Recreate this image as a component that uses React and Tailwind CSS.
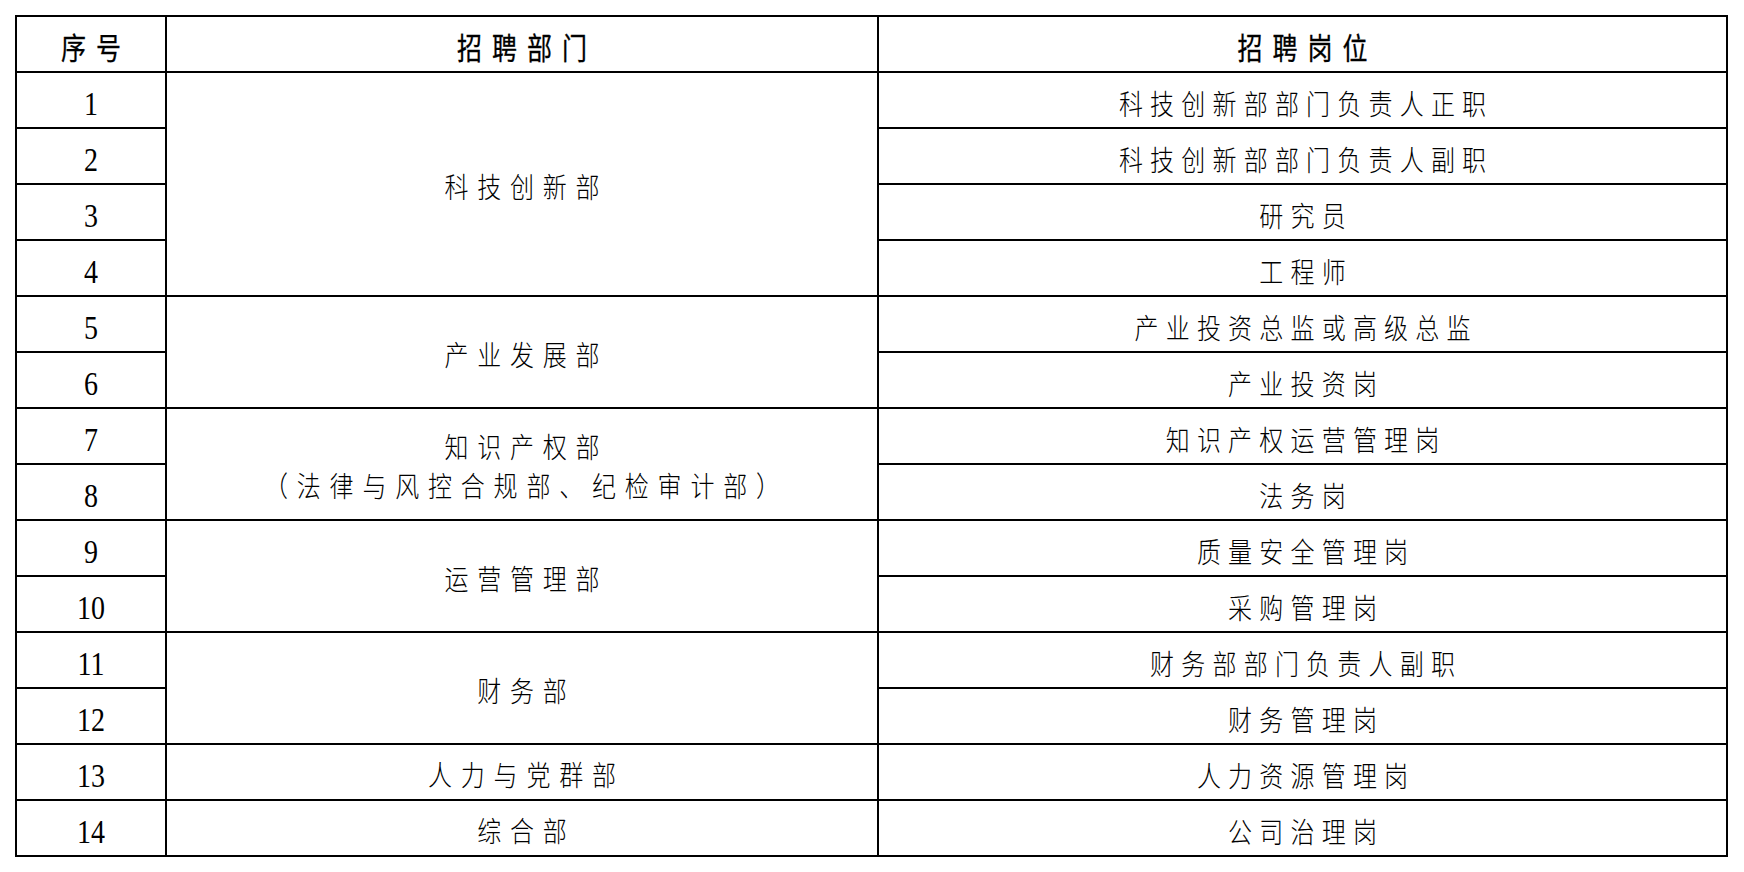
import React from "react";

const CJK = "font-['Noto_Sans_CJK_SC','Noto_Sans',sans-serif]";
const SERIF = "font-['Liberation_Serif','Noto_Sans_CJK_SC',serif]";

const rows = [
  { n: 1, pos: "科技创新部部门负责人正职", dept: ["科技创新部"], span: 4 },
  { n: 2, pos: "科技创新部部门负责人副职" },
  { n: 3, pos: "研究员" },
  { n: 4, pos: "工程师" },
  { n: 5, pos: "产业投资总监或高级总监", dept: ["产业发展部"], span: 2 },
  { n: 6, pos: "产业投资岗" },
  {
    n: 7,
    pos: "知识产权运营管理岗",
    dept: ["知识产权部", "（法律与风控合规部、纪检审计部）"],
    span: 2,
  },
  { n: 8, pos: "法务岗" },
  { n: 9, pos: "质量安全管理岗", dept: ["运营管理部"], span: 2 },
  { n: 10, pos: "采购管理岗" },
  { n: 11, pos: "财务部部门负责人副职", dept: ["财务部"], span: 2 },
  { n: 12, pos: "财务管理岗" },
  { n: 13, pos: "人力资源管理岗", dept: ["人力与党群部"], span: 1 },
  { n: 14, pos: "公司治理岗", dept: ["综合部"], span: 1 },
];

const spanClass = { 1: "row-span-1", 2: "row-span-2", 4: "row-span-4" };

function HeadText({ children }) {
  return (
    <span
      className={`${CJK} text-[25px] leading-none tracking-[10px] -mr-[10px] text-black scale-y-[1.18] [-webkit-text-stroke:0.25px_black]`}
    >
      {children}
    </span>
  );
}

function DeptText({ children }) {
  return (
    <span
      className={`${CJK} font-light text-[24px] leading-[39px] tracking-[8.8px] -mr-[8.8px] text-black scale-y-[1.18] whitespace-nowrap`}
    >
      {children}
    </span>
  );
}

function PosText({ children }) {
  return (
    <span
      className={`${CJK} font-light text-[24px] leading-[39px] tracking-[7.2px] -mr-[7.2px] text-black scale-y-[1.18] whitespace-nowrap`}
    >
      {children}
    </span>
  );
}

export default function App() {
  const cells = [];
  cells.push(
    <div key="h1" className="col-start-1 bg-white flex items-center justify-center pt-[5px]">
      <HeadText>序号</HeadText>
    </div>,
    <div key="h2" className="col-start-2 bg-white flex items-center justify-center pt-[5px]">
      <HeadText>招聘部门</HeadText>
    </div>,
    <div key="h3" className="col-start-3 bg-white flex items-center justify-center pt-[5px]">
      <HeadText>招聘岗位</HeadText>
    </div>
  );
  rows.forEach((r) => {
    cells.push(
      <div
        key={`n${r.n}`}
        className="col-start-1 bg-white flex items-center justify-center pt-[8px]"
      >
        <span className={`${SERIF} text-[28px] leading-none text-black scale-y-[1.18]`}>
          {r.n}
        </span>
      </div>
    );
    if (r.dept) {
      cells.push(
        <div
          key={`d${r.n}`}
          className={`col-start-2 ${spanClass[r.span]} bg-white flex flex-col items-center justify-center pt-[2px]`}
        >
          {r.dept.map((t) => (
            <DeptText key={t}>{t}</DeptText>
          ))}
        </div>
      );
    }
    cells.push(
      <div
        key={`p${r.n}`}
        className="col-start-3 bg-white flex items-center justify-center pt-[4px]"
      >
        <PosText>{r.pos}</PosText>
      </div>
    );
  });

  return (
    <div className="w-[1744px] h-[872px] bg-white overflow-hidden">
      <div className="ml-[15px] mt-[15px] w-fit grid grid-cols-[148px_710px_847px] grid-rows-[repeat(15,54px)] gap-[2px] p-[2px] bg-black">
        {cells}
      </div>
    </div>
  );
}
